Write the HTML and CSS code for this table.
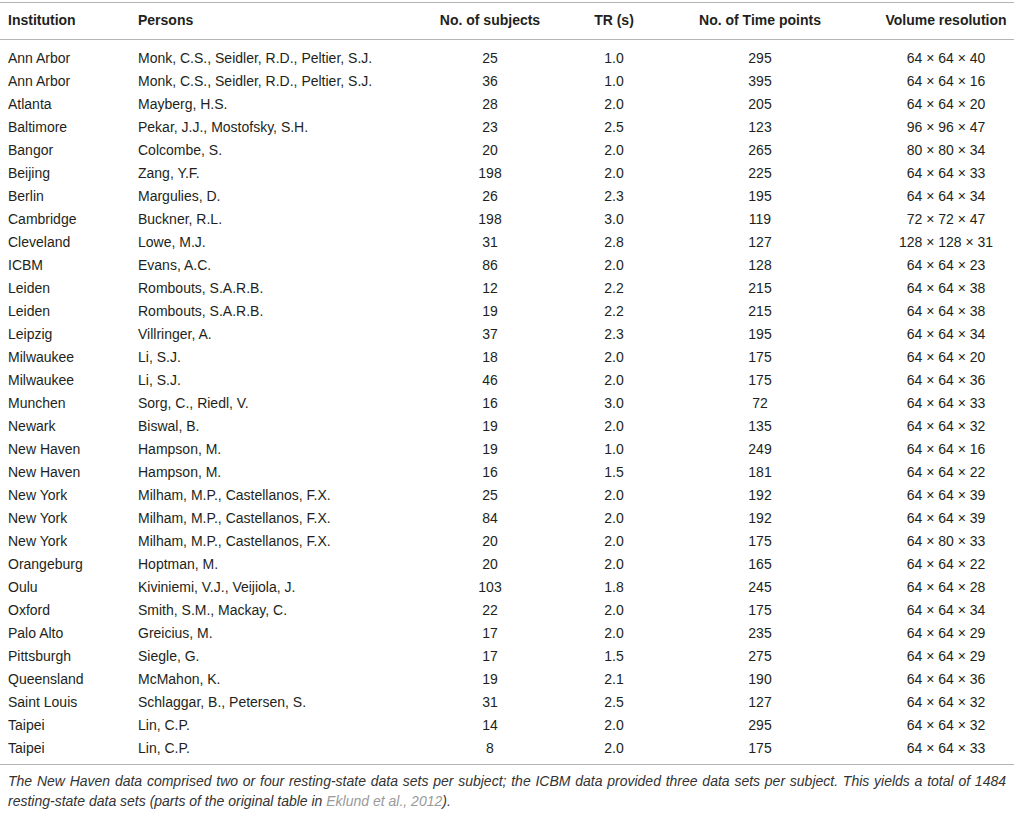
FILE: index.html
```html
<!DOCTYPE html>
<html>
<head>
<meta charset="utf-8">
<link rel="stylesheet" href="styles.css">
</head>
<body>
<div class="wrap">
<table class="data">
<colgroup>
<col class="c1"><col class="c2"><col class="c3"><col class="c4"><col class="c5"><col class="c6">
</colgroup>
<thead>
<tr><th class="l">Institution</th><th class="l">Persons</th><th>No. of subjects</th><th>TR (s)</th><th>No. of Time points</th><th>Volume resolution</th></tr>
</thead>
<tbody>
<tr><td class="l">Ann Arbor</td><td class="l">Monk, C.S., Seidler, R.D., Peltier, S.J.</td><td>25</td><td>1.0</td><td>295</td><td>64 × 64 × 40</td></tr>
<tr><td class="l">Ann Arbor</td><td class="l">Monk, C.S., Seidler, R.D., Peltier, S.J.</td><td>36</td><td>1.0</td><td>395</td><td>64 × 64 × 16</td></tr>
<tr><td class="l">Atlanta</td><td class="l">Mayberg, H.S.</td><td>28</td><td>2.0</td><td>205</td><td>64 × 64 × 20</td></tr>
<tr><td class="l">Baltimore</td><td class="l">Pekar, J.J., Mostofsky, S.H.</td><td>23</td><td>2.5</td><td>123</td><td>96 × 96 × 47</td></tr>
<tr><td class="l">Bangor</td><td class="l">Colcombe, S.</td><td>20</td><td>2.0</td><td>265</td><td>80 × 80 × 34</td></tr>
<tr><td class="l">Beijing</td><td class="l">Zang, Y.F.</td><td>198</td><td>2.0</td><td>225</td><td>64 × 64 × 33</td></tr>
<tr><td class="l">Berlin</td><td class="l">Margulies, D.</td><td>26</td><td>2.3</td><td>195</td><td>64 × 64 × 34</td></tr>
<tr><td class="l">Cambridge</td><td class="l">Buckner, R.L.</td><td>198</td><td>3.0</td><td>119</td><td>72 × 72 × 47</td></tr>
<tr><td class="l">Cleveland</td><td class="l">Lowe, M.J.</td><td>31</td><td>2.8</td><td>127</td><td>128 × 128 × 31</td></tr>
<tr><td class="l">ICBM</td><td class="l">Evans, A.C.</td><td>86</td><td>2.0</td><td>128</td><td>64 × 64 × 23</td></tr>
<tr><td class="l">Leiden</td><td class="l">Rombouts, S.A.R.B.</td><td>12</td><td>2.2</td><td>215</td><td>64 × 64 × 38</td></tr>
<tr><td class="l">Leiden</td><td class="l">Rombouts, S.A.R.B.</td><td>19</td><td>2.2</td><td>215</td><td>64 × 64 × 38</td></tr>
<tr><td class="l">Leipzig</td><td class="l">Villringer, A.</td><td>37</td><td>2.3</td><td>195</td><td>64 × 64 × 34</td></tr>
<tr><td class="l">Milwaukee</td><td class="l">Li, S.J.</td><td>18</td><td>2.0</td><td>175</td><td>64 × 64 × 20</td></tr>
<tr><td class="l">Milwaukee</td><td class="l">Li, S.J.</td><td>46</td><td>2.0</td><td>175</td><td>64 × 64 × 36</td></tr>
<tr><td class="l">Munchen</td><td class="l">Sorg, C., Riedl, V.</td><td>16</td><td>3.0</td><td>72</td><td>64 × 64 × 33</td></tr>
<tr><td class="l">Newark</td><td class="l">Biswal, B.</td><td>19</td><td>2.0</td><td>135</td><td>64 × 64 × 32</td></tr>
<tr><td class="l">New Haven</td><td class="l">Hampson, M.</td><td>19</td><td>1.0</td><td>249</td><td>64 × 64 × 16</td></tr>
<tr><td class="l">New Haven</td><td class="l">Hampson, M.</td><td>16</td><td>1.5</td><td>181</td><td>64 × 64 × 22</td></tr>
<tr><td class="l">New York</td><td class="l">Milham, M.P., Castellanos, F.X.</td><td>25</td><td>2.0</td><td>192</td><td>64 × 64 × 39</td></tr>
<tr><td class="l">New York</td><td class="l">Milham, M.P., Castellanos, F.X.</td><td>84</td><td>2.0</td><td>192</td><td>64 × 64 × 39</td></tr>
<tr><td class="l">New York</td><td class="l">Milham, M.P., Castellanos, F.X.</td><td>20</td><td>2.0</td><td>175</td><td>64 × 80 × 33</td></tr>
<tr><td class="l">Orangeburg</td><td class="l">Hoptman, M.</td><td>20</td><td>2.0</td><td>165</td><td>64 × 64 × 22</td></tr>
<tr><td class="l">Oulu</td><td class="l">Kiviniemi, V.J., Veijiola, J.</td><td>103</td><td>1.8</td><td>245</td><td>64 × 64 × 28</td></tr>
<tr><td class="l">Oxford</td><td class="l">Smith, S.M., Mackay, C.</td><td>22</td><td>2.0</td><td>175</td><td>64 × 64 × 34</td></tr>
<tr><td class="l">Palo Alto</td><td class="l">Greicius, M.</td><td>17</td><td>2.0</td><td>235</td><td>64 × 64 × 29</td></tr>
<tr><td class="l">Pittsburgh</td><td class="l">Siegle, G.</td><td>17</td><td>1.5</td><td>275</td><td>64 × 64 × 29</td></tr>
<tr><td class="l">Queensland</td><td class="l">McMahon, K.</td><td>19</td><td>2.1</td><td>190</td><td>64 × 64 × 36</td></tr>
<tr><td class="l">Saint Louis</td><td class="l">Schlaggar, B., Petersen, S.</td><td>31</td><td>2.5</td><td>127</td><td>64 × 64 × 32</td></tr>
<tr><td class="l">Taipei</td><td class="l">Lin, C.P.</td><td>14</td><td>2.0</td><td>295</td><td>64 × 64 × 32</td></tr>
<tr><td class="l">Taipei</td><td class="l">Lin, C.P.</td><td>8</td><td>2.0</td><td>175</td><td>64 × 64 × 33</td></tr>
</tbody>
</table>
<p class="note">The New Haven data comprised two or four resting-state data sets per subject; the ICBM data provided three data sets per subject. This yields a total of 1484 resting-state data sets (parts of the original table in <span class="ref">Eklund et al., 2012</span>).</p>
</div>
</body>
</html>
```
FILE: styles.css
```css
html, body {
  margin: 0;
  padding: 0;
  background: #ffffff;
}
body {
  font-family: "Liberation Sans", Arial, sans-serif;
  color: #231f20;
}
.wrap {
  width: 1014px;
  padding-top: 2px;
}
.data {
  width: 1014px;
  border-collapse: collapse;
  table-layout: fixed;
  border-top: 1px solid #b5b5b5;
  border-bottom: 1px solid #b5b5b5;
  font-size: 14px;
}
.c1 { width: 130px; }
.c2 { width: 264px; }
.c3 { width: 192px; }
.c4 { width: 56px; }
.c5 { width: 236px; }
.c6 { width: 136px; }
.data th {
  font-weight: bold;
  text-align: center;
  white-space: nowrap;
  line-height: 16px;
  padding: 9px 0 11px 0;
  border-bottom: 1px solid #b5b5b5;
}
.data td {
  text-align: center;
  white-space: nowrap;
  line-height: 23px;
  height: 23px;
  padding: 0;
}
.data th.l, .data td.l {
  text-align: left;
  padding-left: 8px;
}
.data tbody tr:first-child td {
  padding-top: 7px;
}
.data tbody tr:last-child td {
  padding-bottom: 4px;
}
.note {
  margin: 6px 0 0 0;
  padding: 0 8px;
  font-style: italic;
  font-size: 14px;
  line-height: 20px;
  text-align: justify;
  color: #333333;
}
.ref {
  color: #9a9a9a;
}
```
